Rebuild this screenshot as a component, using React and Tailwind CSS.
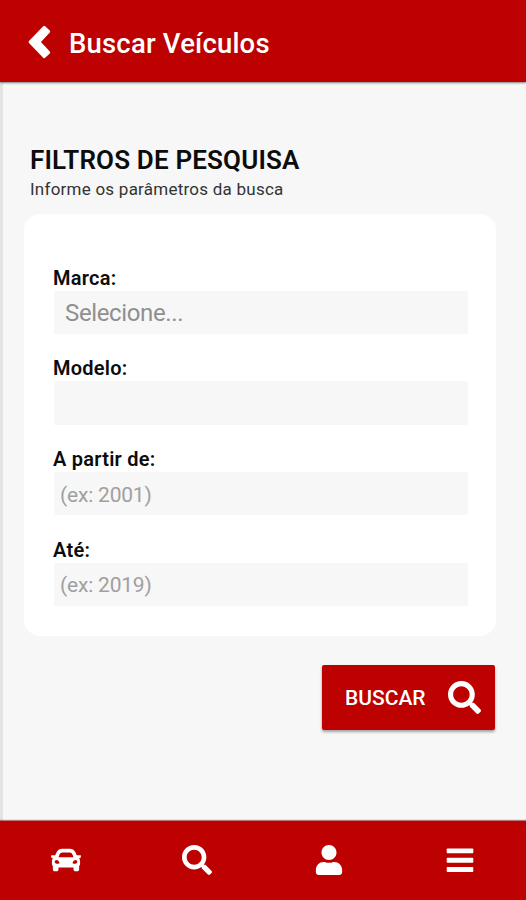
import { FaCar, FaSearch, FaUser } from 'react-icons/fa'

const fields = [
  { label: 'Marca:', placeholder: 'Selecione...', style: 'pl-[11px] pt-[1px] text-[24px] tracking-[-0.36px] placeholder:text-[#8f8f8f]' },
  { label: 'Modelo:', placeholder: '', style: 'pl-[7px] text-[21px]' },
  { label: 'A partir de:', placeholder: '(ex: 2001)', style: 'pl-[6px] pt-[2px] text-[21px] tracking-[-0.2px] placeholder:text-[#a0a0a0]' },
  { label: 'Até:', placeholder: '(ex: 2019)', style: 'pl-[6px] pt-[2px] text-[21px] tracking-[-0.2px] placeholder:text-[#a0a0a0]' },
]

const tabs = [
  { name: 'Veículos', Icon: FaCar },
  { name: 'Buscar', Icon: FaSearch },
  { name: 'Perfil', Icon: FaUser },
  { name: 'Menu', Icon: BarsIcon },
]

function BackIcon() {
  return (
    <svg viewBox="0 0 24 36" className="h-[36px] w-[24px]" fill="currentColor" stroke="currentColor" strokeWidth="2.8" strokeLinejoin="round">
      <path d="M3 18 17.2 3.2 21.8 7.6 12 18 21.8 28.4 17.2 32.8Z" />
    </svg>
  )
}

function BarsIcon({ className }) {
  return (
    <svg viewBox="0 0 30 30" className={className} fill="currentColor">
      <rect x="1.7" y="3.4" width="26.6" height="4.9" rx="0.8" />
      <rect x="1.7" y="12.8" width="26.6" height="4.9" rx="0.8" />
      <rect x="1.7" y="22.1" width="26.6" height="4.9" rx="0.8" />
    </svg>
  )
}

export default function App() {
  return (
    <div className="flex h-[900px] w-[526px] flex-col overflow-hidden bg-[#f7f7f7] font-['Roboto',sans-serif] text-[#0c0c0c]">
      <header className="z-10 flex h-[82px] shrink-0 items-center bg-[#bd0000] pl-[27px] text-white shadow-[0_1px_2px_rgba(0,0,0,0.5)]">
        <button aria-label="Voltar" className="mt-[2px]">
          <BackIcon />
        </button>
        <h1 className="ml-[18px] mt-[6px] text-[27.5px] font-medium leading-8 tracking-[0.18px]">Buscar Veículos</h1>
      </header>

      <main className="flex-1 border-l-[3px] border-[#e4e4e4] pl-[21px] pr-[30px] pt-[62px]">
        <h2 className="pl-[6px] text-[26px] font-semibold leading-8 tracking-[0.16px]">FILTROS DE PESQUISA</h2>
        <p className="pl-[6px] text-[17px] leading-[26px] tracking-[0.24px] text-[#333]">Informe os parâmetros da busca</p>

        <form className="mt-[12px] flex h-[422px] flex-col gap-[21.1px] rounded-[16px] bg-white pl-[30px] pr-[28px] pt-[50.8px]">
          {fields.map((field) => (
            <label key={field.label} className="block">
              <span className="-ml-px block text-[20px] font-semibold leading-[26px] tracking-[0.24px]">{field.label}</span>
              <input
                placeholder={field.placeholder}
                className={`block h-[43.5px] w-full bg-[#f7f7f7] outline-none ${field.style}`}
              />
            </label>
          ))}
        </form>

        <button className="ml-auto mr-[1.5px] mt-[29px] flex h-[65px] w-[172.5px] items-center rounded-[2px] bg-[#bd0000] pl-[23px] text-white shadow-[0_2px_3px_rgba(0,0,0,0.35)]">
          <span className="mt-[3px] w-[103px] text-left text-[21px] font-medium">BUSCAR</span>
          <FaSearch className="h-[33px] w-[33px]" />
        </button>
      </main>

      <nav className="grid h-[79px] shrink-0 grid-cols-4 bg-[#bd0000] pb-[1px] text-white shadow-[0_-1px_1px_rgba(120,0,0,0.5)]">
        {tabs.map(({ name, Icon }) => (
          <button key={name} aria-label={name} className="flex items-center justify-center">
            <Icon className="h-[30px] w-[30px]" />
          </button>
        ))}
      </nav>
    </div>
  )
}
